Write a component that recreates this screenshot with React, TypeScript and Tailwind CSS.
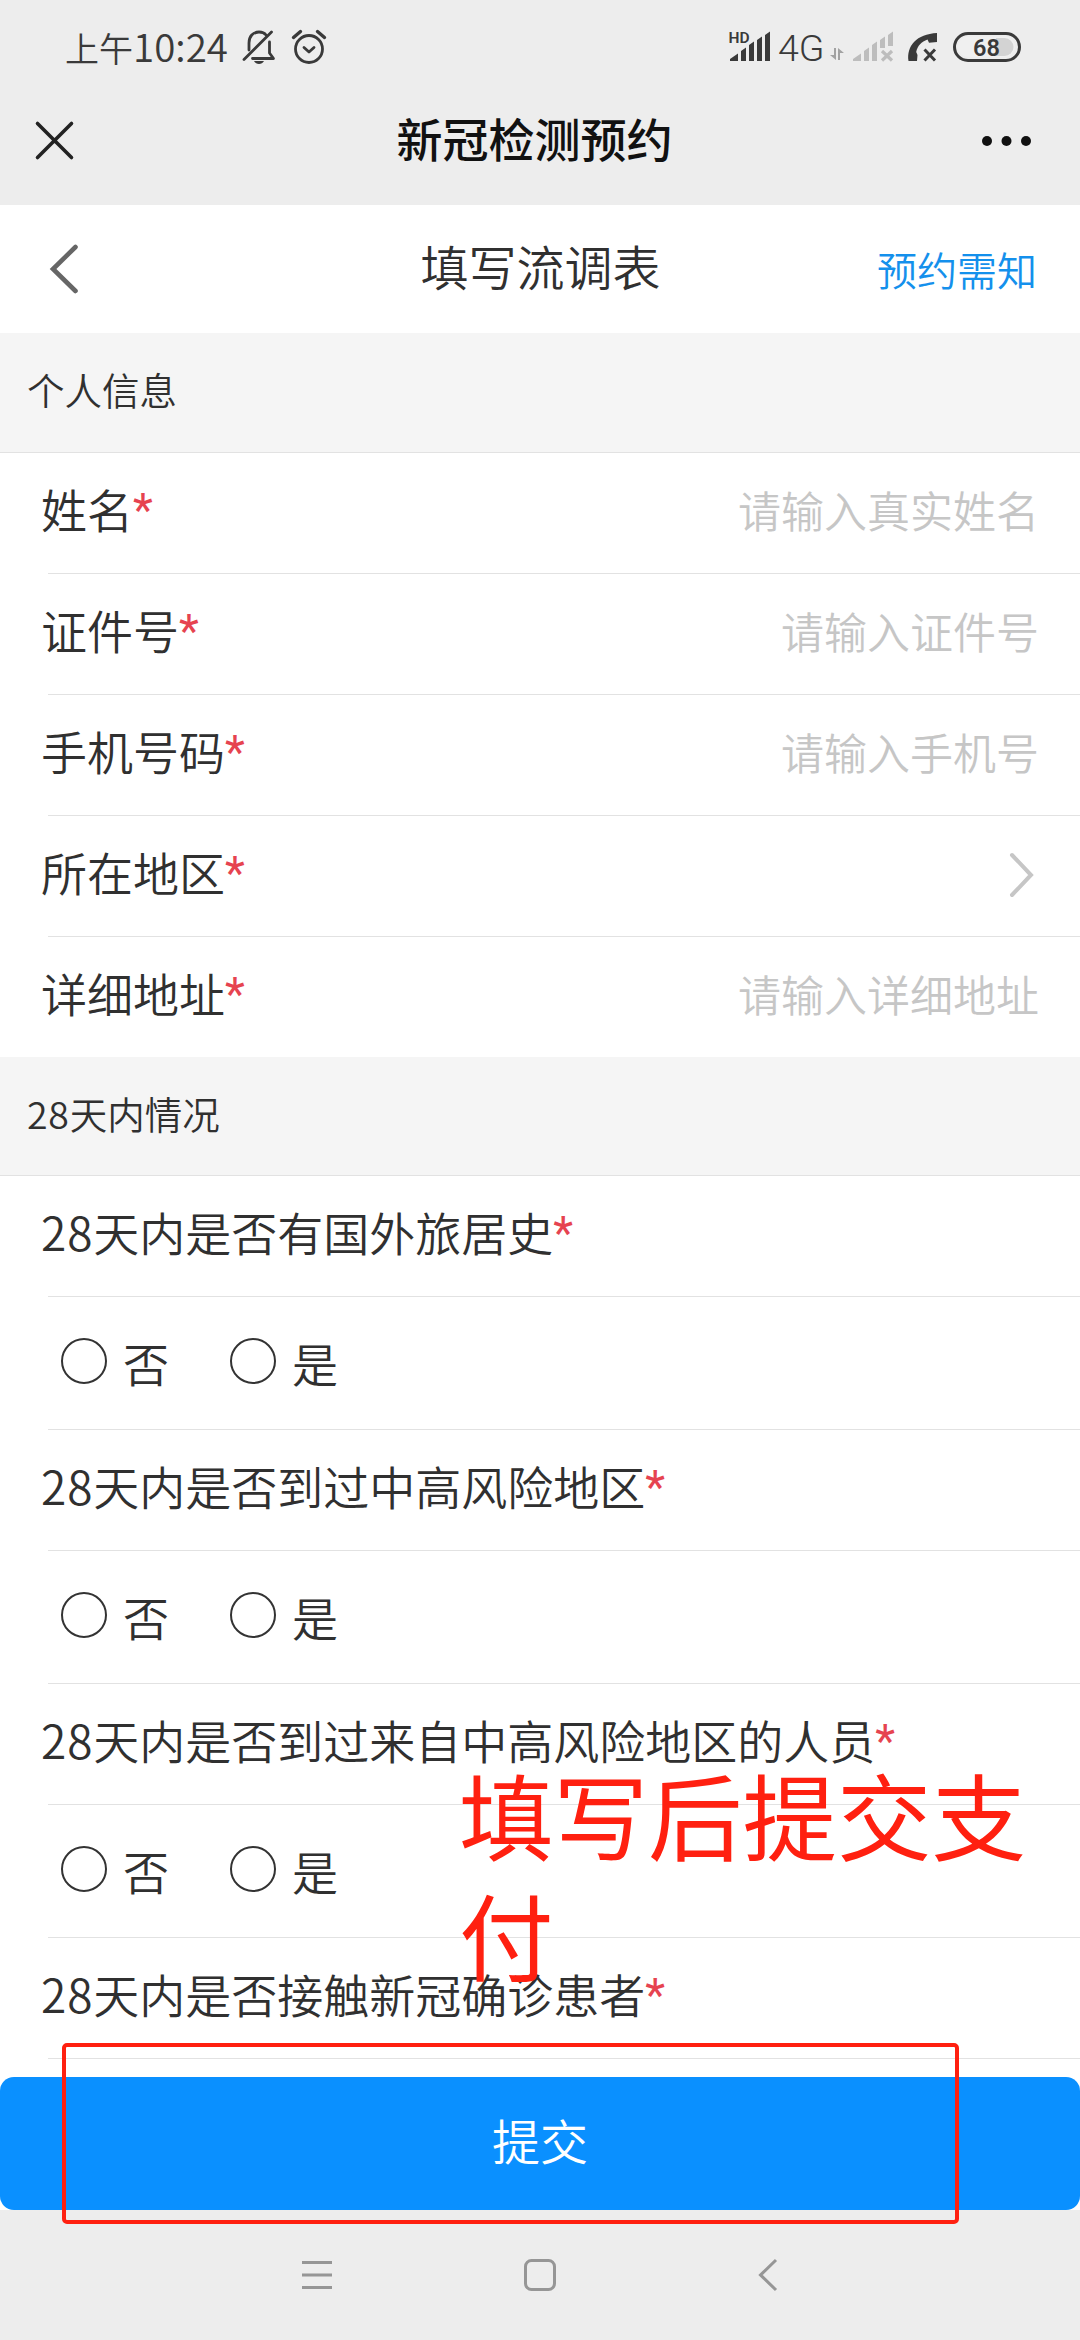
import React, { useState } from 'react';

interface Field {
  label: string;
  placeholder?: string;
}

const FIELDS: Field[] = [
  { label: '姓名', placeholder: '请输入真实姓名' },
  { label: '证件号', placeholder: '请输入证件号' },
  { label: '手机号码', placeholder: '请输入手机号' },
  { label: '所在地区' },
  { label: '详细地址', placeholder: '请输入详细地址' },
];

const QUESTIONS = [
  '28天内是否有国外旅居史',
  '28天内是否到过中高风险地区',
  '28天内是否到过来自中高风险地区的人员',
];

const StatusBar: React.FC = () => (
  <div className="h-[94px] pl-[65px] pr-[58px] flex items-center justify-between text-[#3a3a3a]">
    <div className="flex items-center">
      <div className="flex items-baseline leading-[50px]">
        <span className="text-[34px]">上午</span>
        <span className="w-[96px] text-[38.5px] font-['Noto_Sans_CJK_SC',sans-serif]">10:24</span>
      </div>
      <svg className="ml-[13px]" width="86" height="36" viewBox="0 0 86 36" fill="none" stroke="currentColor" strokeWidth="2.8" strokeLinecap="round">
        {/* Muted bell */}
        <path d="M7 21V14c0-6.500 4-11 10-11 3 0 5.500 1 7 3" />
        <path d="M2 30.500L29.500 3" />
        <path d="M10.500 29.500H31.500L27.500 24V13" strokeLinejoin="round" />
        <path d="M12 32h10c-1 2-3 3-5 3s-4-1-5-3z" fill="currentColor" stroke="none" />
        {/* Alarm clock */}
        <circle cx="67" cy="20" r="13.500" />
        <path d="M62 18.500l5 4.500 5-4.500" strokeLinejoin="round" />
        <path d="M51.500 8.500l7-6M75.500 2.500l7 6" strokeWidth="3.400" />
      </svg>
    </div>
    <svg width="294" height="48" viewBox="727 23 294 48" fill="currentColor">
      <text x="727.500" y="42.500" fontSize="15.500" fontWeight="600">HD</text>
      <path d="M729 61v-2l8-5.500V61zM740 61V51l5-3.500V61zM748 61V45l5-3.500V61zM756 61V40l5-3.500V61zM764 61V35l5-3.500V61z" />
      <text x="777" y="61" fontSize="37.500" fontWeight="300">4G</text>
      <path d="M835 48v12l-6-5h4v-7zM837 60V48l6 5h-4v7z" fill="#a2a2a2" />
      <g fill="#bdbdbd">
        <path d="M852 61v-2l8-5.500V61zM863 61V51l5-3.500V61zM871 61V45l5-3.500V61zM879 48V40l5-3.500V48zM887 46V35l5-3.500V46z" />
        <path d="M881 51l10 9.500M891 51l-10 9.500" stroke="#bdbdbd" strokeWidth="3.200" />
      </g>
      <path d="M907.500 61c-2-15 8-27 28.500-28v9l-8 .8-1.500-3.300c-6 2.500-10 6-11.300 12.500l1.300 3-.5 6z" />
      <path d="M923.500 49.500l10.500 11M934 49.500l-10.500 11" stroke="currentColor" strokeWidth="3" />
      <rect x="957" y="36.500" width="57" height="20.500" rx="10" fill="#f0f0f0" />
      <path d="M995 38h8.500a9 9 0 0 1 0 18H995z" fill="#d3d3d3" />
      <rect x="953.500" y="33.500" width="65" height="27" rx="13.500" fill="none" stroke="currentColor" strokeWidth="3" />
      <text x="972" y="55.500" fontSize="23.500" fontWeight="600">68</text>
    </svg>
  </div>
);

// Keeps the leading digits in the same face as the characters that follow
const MixedText: React.FC<{ text: string }> = ({ text }) => {
  const digits = text.match(/^\d+/)?.[0] ?? '';
  return (
    <>
      {digits && <span className="font-['Noto_Sans_CJK_SC',sans-serif] tracking-[0.02em] leading-[0]">{digits}</span>}
      {text.slice(digits.length)}
    </>
  );
};

const Label: React.FC<{ text: string }> = ({ text }) => (
  <div className="pb-[3px] text-[46px] leading-[46px] whitespace-nowrap">
    <MixedText text={text} />
    <span className="font-normal text-[#e64350] leading-[0] align-[2px]">*</span>
  </div>
);

const Divider: React.FC = () => <div className="ml-[48px] h-px bg-[#e2e2e2]" />;

const QuestionTitle: React.FC<{ text: string }> = ({ text }) => (
  <div>
    <div className="h-[120px] pl-[41px] flex items-center">
      <Label text={text} />
    </div>
    <Divider />
  </div>
);

interface QuestionProps {
  text: string;
  value?: string;
  onChange: (value: string) => void;
}

const Question: React.FC<QuestionProps> = ({ text, value, onChange }) => (
  <div>
    <QuestionTitle text={text} />
    <div className="h-[132px] pl-[61px] pb-1 flex items-center gap-[61px]">
      {['否', '是'].map((option) => (
        <button key={option} onClick={() => onChange(option)} className="flex items-center gap-[16px]">
          <span
            className={`w-[46px] h-[46px] rounded-full border-2 border-[#333] ${
              value === option ? 'bg-[#0a90ff]' : ''
            }`}
          />
          <span className="text-[46px] leading-none mt-2.5">{option}</span>
        </button>
      ))}
    </div>
    <Divider />
  </div>
);

export default function App() {
  const [answers, setAnswers] = useState<Record<string, string>>({});

  return (
    <div
      lang="zh-CN"
      className="relative w-[1080px] h-[2340px] overflow-hidden bg-white text-[#303030] font-[350] font-[Roboto,'Noto_Sans_CJK_SC',sans-serif] flex flex-col"
    >
      {/* System status + webview title */}
      <div className="h-[205px] bg-[#ededed] shrink-0">
        <StatusBar />
        <div className="h-[93px] pl-[34px] pr-[47px] grid grid-cols-[1fr_auto_1fr] items-center">
          <svg width="42" height="42" viewBox="0 0 42 42" stroke="#222" strokeWidth="3.600" strokeLinecap="round">
            <path d="M3.500 3.500l34 34M37.500 3.500l-34 34" />
          </svg>
          <h1 className="ml-0.5 text-[46px] leading-none font-medium text-[#111]">新冠检测预约</h1>
          <svg className="justify-self-end" width="52" height="12" viewBox="0 0 52 12" fill="#111">
            <circle cx="6" cy="6" r="5" />
            <circle cx="25.500" cy="6" r="5" />
            <circle cx="45" cy="6" r="5" />
          </svg>
        </div>
      </div>

      {/* Page header */}
      <div className="h-[128px] shrink-0 pl-[48px] pr-[43px] grid grid-cols-[1fr_auto_1fr] items-center">
        <svg width="32" height="52" viewBox="0 0 32 52" fill="none" stroke="#666" strokeWidth="4.600" strokeLinecap="round">
          <path d="M27.500 4L5 26l22.500 22" />
        </svg>
        <h2 className="-ml-1 mt-0.5 text-[48px] leading-none">填写流调表</h2>
        <a className="justify-self-end mt-2 text-[40px] leading-none text-[#1490ec]">预约需知</a>
      </div>

      <div className="h-[120px] shrink-0 bg-[#f5f5f5] border-b border-[#e2e2e2] pl-[27px] flex items-center text-[37.5px] leading-none">
        个人信息
      </div>
      <div className="shrink-0">
        {FIELDS.map((field, i) => (
          <div key={field.label}>
            <div className="h-[120px] pl-[41px] pr-[41px] flex items-center justify-between">
              <Label text={field.label} />
              {field.placeholder ? (
                <span className="text-[43px] leading-none text-[#c6c6c6]">{field.placeholder}</span>
              ) : (
                <svg className="mr-[4px] mb-[3px]" width="26" height="46" viewBox="0 0 26 46" fill="none" stroke="#c6c6c6" strokeWidth="4" strokeLinecap="round">
                  <path d="M3 3l19 20L3 43" />
                </svg>
              )}
            </div>
            {i < FIELDS.length - 1 && <Divider />}
          </div>
        ))}
      </div>

      <div className="h-[119px] shrink-0 bg-[#f5f5f5] border-b border-[#e2e2e2] pl-[27px] flex items-center text-[37.5px] leading-none">
        <div className="leading-[38px]">
          <MixedText text="28天内情况" />
        </div>
      </div>
      <div className="flex-1 min-h-0">
        {QUESTIONS.map((q) => (
          <Question
            key={q}
            text={q}
            value={answers[q]}
            onChange={(value) => setAnswers((prev) => ({ ...prev, [q]: value }))}
          />
        ))}
        <QuestionTitle text="28天内是否接触新冠确诊患者" />
      </div>

      <button className="h-[133px] shrink-0 rounded-[14px] bg-[#0a90ff] text-white text-[48px] leading-none">提交</button>

      {/* System navigation */}
      <div className="h-[130px] shrink-0 bg-[#ededed] pl-[300px] flex items-center">
        <svg width="34" height="34" viewBox="0 0 34 34" stroke="#969696" strokeWidth="3">
          <path d="M2 4.500h30M2 17h30M2 29.500h30" />
        </svg>
        <svg className="ml-[189px]" width="34" height="34" viewBox="0 0 34 34" fill="none" stroke="#969696" strokeWidth="3">
          <rect x="2.500" y="2.500" width="29" height="29" rx="6" />
        </svg>
        <svg className="ml-[200px]" width="22" height="34" viewBox="0 0 22 34" fill="none" stroke="#969696" strokeWidth="3">
          <path d="M19 2L3.500 17 19 32" />
        </svg>
      </div>

      {/* Annotation */}
      <div className="absolute left-[459px] top-[1762px] w-[580px] text-[94.5px] leading-[120px] font-normal text-[#ff2010]">
        填写后提交支付
      </div>
      <div className="absolute left-[62px] top-[2043px] w-[897px] h-[181px] rounded-[5px] border-4 border-[#ff2010]" />
    </div>
  );
}
